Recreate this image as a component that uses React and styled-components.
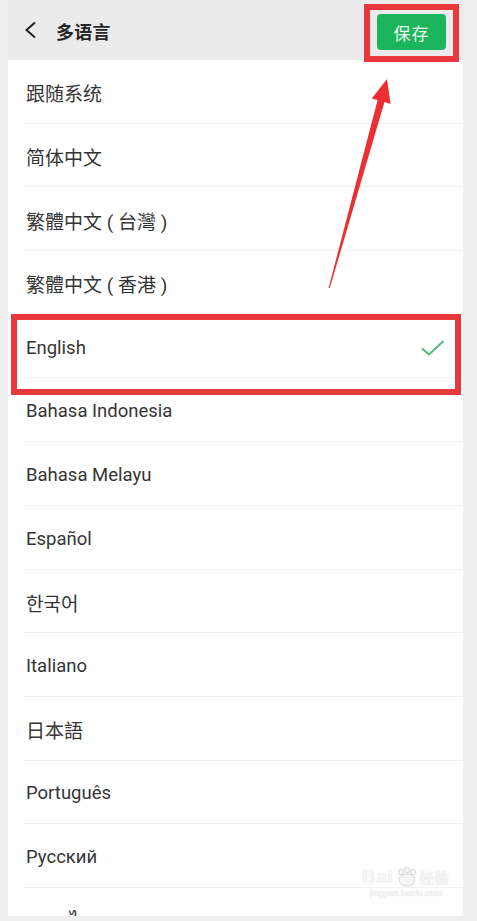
import React from "react";
import styled, { createGlobalStyle } from "styled-components";

const Global = createGlobalStyle`
  html, body { margin: 0; padding: 0; background: #efefef; }
  body { font-family: Roboto, "Noto Sans CJK SC", "Noto Sans", sans-serif; }
`;

const Page = styled.div`
  position: relative;
  width: 477px;
  height: 921px;
  overflow: hidden;
  background: #efefef;
  box-sizing: border-box;
  padding: 0 14px 5px 8px;
  display: flex;
  flex-direction: column;
`;

const Header = styled.header`
  height: 60px;
  flex: none;
  background: #ebebeb;
  display: flex;
  align-items: center;
  padding: 0 17px 0 17px;
  gap: 19px;
`;

const Title = styled.h1`
  margin: 0;
  flex: 1;
  font-size: 18px;
  font-weight: 700;
  color: #262626;
  font-family: "Noto Sans CJK SC", sans-serif;
  letter-spacing: 0.3px;
  margin-top: 2px;
`;

const SaveButton = styled.button`
  border: none;
  background: #1cb55c;
  color: #eaf8ef;
  width: 69px;
  height: 36px;
  border-radius: 4px;
  font-family: "Noto Sans CJK SC", sans-serif;
  font-size: 17px;
  letter-spacing: 1px;
  padding: 0;
  margin-top: 4px;
`;

const List = styled.ul`
  list-style: none;
  margin: 0;
  padding: 0;
  flex: 1;
  background: #fff;
  overflow: hidden;
`;

const Row = styled.li`
  height: 63.7px;
  box-sizing: border-box;
  margin-left: 16px;
  padding: 3px 18px 0 2px;
  border-bottom: 1px solid #f1f1f1;
  display: flex;
  align-items: center;
  justify-content: space-between;
  font-size: ${(p) => (p.$cjk ? "19px" : "18.5px")};
  color: #353535;
  font-family: Roboto, "Noto Sans CJK SC", "Noto Sans CJK KR", sans-serif;
  white-space: pre;
`;

const Mark = styled.div`
  position: absolute;
  box-sizing: border-box;
  border: 6px solid #e8383b;
  pointer-events: none;
`;

const Overlay = styled.svg`
  position: absolute;
  left: 0;
  top: 0;
  pointer-events: none;
`;

const Watermark = styled.div`
  position: absolute;
  left: 356px;
  top: 866px;
  width: 100px;
  display: flex;
  flex-direction: column;
  align-items: center;
  color: #f6f6f6;
  text-shadow: 0 0 1px #cfcfcf;
  font-family: "Liberation Sans", sans-serif;
  pointer-events: none;
  white-space: nowrap;
`;

const WmTop = styled.div`
  display: flex;
  align-items: center;
  gap: 2px;
  font-size: 18px;
  font-weight: 700;
  letter-spacing: 1px;
  line-height: 22px;
  span { font-family: "Noto Sans CJK SC", sans-serif; font-size: 14px; }
`;

const WmBottom = styled.div`
  font-size: 9px;
  line-height: 11px;
`;

const languages = [
  { name: "跟随系统", cjk: true },
  { name: "简体中文", cjk: true },
  { name: "繁體中文 ( 台灣 )", cjk: true },
  { name: "繁體中文 ( 香港 )", cjk: true },
  { name: "English", checked: true },
  { name: "Bahasa Indonesia" },
  { name: "Bahasa Melayu" },
  { name: "Español" },
  { name: "한국어", cjk: true },
  { name: "Italiano" },
  { name: "日本語", cjk: true },
  { name: "Português" },
  { name: "Русский" },
  { name: "ภาษาไทย" },
];

export default function App() {
  return (
    <>
      <Global />
      <Page>
        <Header>
          <svg width="12" height="18" viewBox="0 0 12 18">
            <polyline points="10,1.5 1.5,9 10,16.5" fill="none" stroke="#222" strokeWidth="2" />
          </svg>
          <Title>多语言</Title>
          <SaveButton>保存</SaveButton>
        </Header>
        <List>
          {languages.map((l) => (
            <Row key={l.name} $cjk={l.cjk}>
              <span>{l.name}</span>
              {l.checked && (
                <svg width="24" height="16" viewBox="0 0 24 16">
                  <polyline points="1,8.5 8,14.5 22.5,1" fill="none" stroke="#52b884" strokeWidth="2" />
                </svg>
              )}
            </Row>
          ))}
        </List>
        <Mark style={{ left: 364, top: 4, width: 95, height: 58 }} />
        <Mark style={{ left: 11, top: 314, width: 450, height: 81 }} />
        <Overlay width="477" height="921" viewBox="0 0 477 921">
          <polygon
            points="387,79 390.5,104 384.5,102 329.8,288 328.6,288 377.6,100 371.8,98.5"
            fill="#ec2f33"
          />
        </Overlay>
        <Watermark>
          <WmTop>
            Bai
            <svg width="22" height="20" viewBox="0 0 22 20">
              <g fill="#f6f6f6" stroke="#cfcfcf" strokeWidth="0.8">
                <ellipse cx="5" cy="5" rx="2.5" ry="3" />
                <ellipse cx="11" cy="3" rx="2.5" ry="3" />
                <ellipse cx="17" cy="5" rx="2.5" ry="3" />
                <ellipse cx="11" cy="13" rx="8" ry="6" />
              </g>
            </svg>
            <span>经验</span>
          </WmTop>
          <WmBottom>jingyan.baidu.com</WmBottom>
        </Watermark>
      </Page>
    </>
  );
}
